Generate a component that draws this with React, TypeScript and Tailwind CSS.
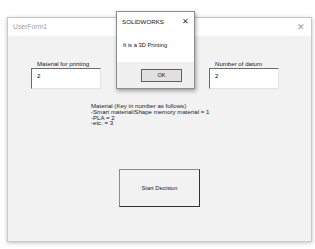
import React from "react";

const ui = { fontFamily: '"Liberation Sans", Arial, sans-serif' };

function Field({ label, value }: { label: string; value: string }) {
  return (
    <div className="flex flex-col w-[70px]">
      <span className="pl-[6px] text-[6.1px] leading-[7px] text-[#222]">{label}</span>
      <div className="mt-[1px] h-[21px] bg-white border border-t-[#6b6b6b] border-l-[#6b6b6b] border-r-[#e3e3e3] border-b-[#e3e3e3] pl-[5px] pt-[3px] text-[6.2px] leading-[8px] text-black">
        {value}
      </div>
    </div>
  );
}

export default function App() {
  return (
    <div className="relative w-[315px] h-[249px] bg-white overflow-hidden pt-[17px] pl-[7px]" style={ui}>
      {/* UserForm window */}
      <div className="w-[305px] h-[225px] flex flex-col border border-[#c9c9c9] shadow-[0_1px_4px_rgba(0,0,0,0.25)]">
        <div className="h-[18px] bg-white flex items-center justify-between pl-[5px] pr-[6px]">
          <span className="text-[6.8px] text-[#a0a0a0]">UserForm1</span>
          <span className="text-[9px] leading-none text-[#9a9a9a]">✕</span>
        </div>
        <div className="flex-1 bg-[#f2f2f2] flex flex-col">
          <div className="flex justify-between pl-[23px] pr-[32px] pt-[24px]">
            <Field label="Material for printing" value="2" />
            <Field label="Number of datum" value="2" />
          </div>
          <div className="pl-[83px] pt-[14px] text-[6.1px] leading-[5.8px] text-[#222]">
            <p>Material (Key in number as follows)</p>
            <p>-Smart material/Shape memory material = 1</p>
            <p>-PLA = 2</p>
            <p>-etc. = 3</p>
          </div>
          <div className="flex justify-center pt-[43px]">
            <button className="w-[81px] h-[38px] bg-[#f2f2f2] border border-[#8a8a8a] border-r-[#333] border-b-[#333] text-[5.8px] text-[#222]">
              Start Decision
            </button>
          </div>
        </div>
      </div>

      {/* SOLIDWORKS message box */}
      <div className="absolute left-[116px] top-[11px] w-[79px] h-[78px] flex flex-col bg-white border border-[#8c8c8c] shadow-[1px_2px_4px_rgba(0,0,0,0.35)]">
        <div className="flex items-center justify-between pl-[5px] pr-[5px] pt-[5px]">
          <span className="text-[6.2px] text-[#111]">SOLIDWORKS</span>
          <span className="text-[8px] leading-none text-[#333]">✕</span>
        </div>
        <div className="pl-[6px] pt-[15px] text-[5.8px] text-[#111]">It is a 3D Printing</div>
        <div className="mt-auto h-[26px] bg-[#f0f0f0] flex items-center justify-end pr-[12px]">
          <button className="w-[41px] h-[13px] bg-[#e1e1e1] border border-[#0078d7] text-[5.6px] text-[#111]">
            OK
          </button>
        </div>
      </div>
    </div>
  );
}
